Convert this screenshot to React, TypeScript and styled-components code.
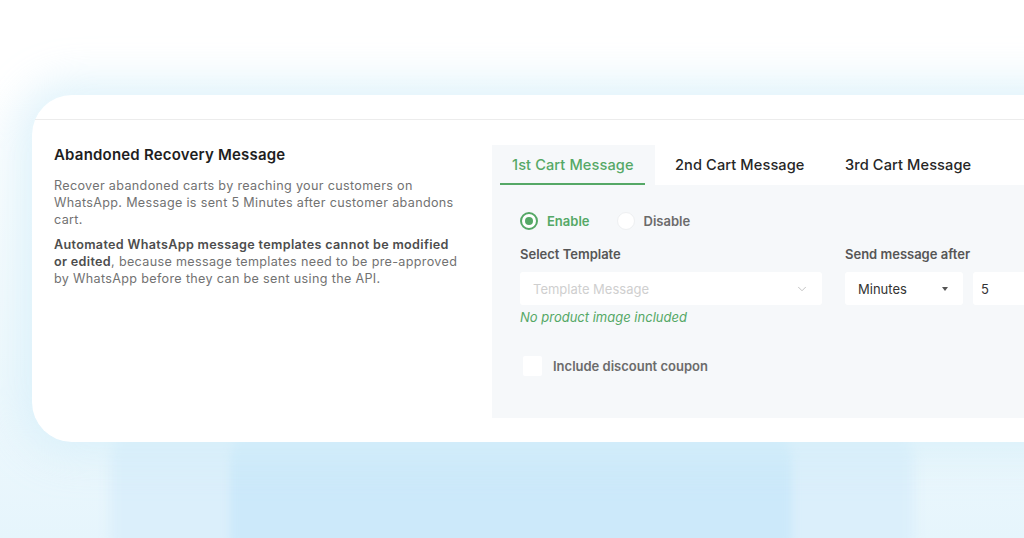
import React from 'react';
import styled, { createGlobalStyle } from 'styled-components';
import { ChevronDown } from 'lucide-react';

const GlobalStyle = createGlobalStyle`
  html, body {
    margin: 0;
    padding: 0;
    height: 100%;
  }
  body {
    font-family: Inter, "Noto Sans", sans-serif;
    -webkit-font-smoothing: antialiased;
  }
`;

const green = '#55a866';

const Page = styled.div`
  position: relative;
  width: 1024px;
  height: 538px;
  overflow: hidden;
  background: linear-gradient(to bottom, #ffffff 0%, #ffffff 14%, #f3fafd 55%, #e6f5fc 100%);
`;

// decorative stacked sheets peeking out below the card
const Sheet = styled.div<{ $left: number; $right: number; $top: number; $color: string; $blur: number }>`
  position: absolute;
  left: ${(p) => p.$left}px;
  right: ${(p) => p.$right}px;
  top: ${(p) => p.$top}px;
  bottom: -40px;
  border-radius: 40px;
  background: ${(p) => p.$color};
  filter: blur(${(p) => p.$blur}px);
`;

const Stage = styled.div`
  position: relative;
  padding: 95px 0 0 32px;
`;

const Card = styled.section`
  width: 1060px;
  height: 347px;
  background: #ffffff;
  border-radius: 40px 0 0 40px;
  box-shadow: 0 0 40px 14px rgba(214, 239, 250, 0.75);
  display: flex;
  flex-direction: column;
`;

const CardHeader = styled.div`
  height: 24px;
  margin-left: 3px;
  border-bottom: 1px solid #ececec;
`;

const CardBody = styled.div`
  flex: 1;
  display: flex;
  padding: 25px 0 24px 22px;
`;

const Intro = styled.div`
  flex: 0 0 410px;
  margin-right: 28px;
  padding-top: 1px;
`;

const Title = styled.h2`
  margin: 0 0 13px;
  font-size: 15px;
  font-weight: 600;
  color: #1e1e1e;
  letter-spacing: 0.2px;
  line-height: 18px;
`;

const Para = styled.p`
  margin: 0 0 8px;
  font-size: 12.6px;
  line-height: 17px;
  color: #727272;
  letter-spacing: 0.33px;

  strong {
    font-weight: 600;
    color: #4d4d4d;
  }
`;

const Settings = styled.div`
  flex: 1;
  min-width: 0;
  display: flex;
  flex-direction: column;
`;

const Tabs = styled.div`
  display: flex;
  height: 40px;
`;

const Tab = styled.div<{ $active?: boolean; $width: number }>`
  position: relative;
  width: ${(p) => p.$width}px;
  padding-left: 20px;
  box-sizing: border-box;
  display: flex;
  align-items: center;
  font-size: 14.6px;
  font-weight: 500;
  letter-spacing: 0.1px;
  color: ${(p) => (p.$active ? green : '#262626')};
  background: ${(p) => (p.$active ? '#f6f8fa' : 'transparent')};

  &::after {
    content: '';
    display: ${(p) => (p.$active ? 'block' : 'none')};
    position: absolute;
    left: 8px;
    right: 10px;
    bottom: 0;
    height: 2px;
    background: ${green};
  }
`;

const Panel = styled.div`
  flex: 1;
  background: #f6f8fa;
  padding: 27px 0 0 28px;
`;

const RadioRow = styled.div`
  display: flex;
  align-items: center;
  gap: 27px;
  height: 18px;
`;

const RadioOption = styled.label<{ $checked?: boolean }>`
  display: flex;
  align-items: center;
  gap: 9px;
  font-size: 13px;
  font-weight: 600;
  color: ${(p) => (p.$checked ? green : '#6b6b6b')};
`;

const RadioDot = styled.span<{ $checked?: boolean }>`
  width: 18px;
  height: 18px;
  box-sizing: border-box;
  border-radius: 50%;
  background: #ffffff;
  border: ${(p) => (p.$checked ? `2px solid ${green}` : '1px solid #eef0f2')};
  display: flex;
  align-items: center;
  justify-content: center;

  &::before {
    content: '';
    display: ${(p) => (p.$checked ? 'block' : 'none')};
    width: 8px;
    height: 8px;
    border-radius: 50%;
    background: ${green};
  }
`;

const FieldGrid = styled.div`
  display: grid;
  grid-template-columns: 302px 118px 133px;
  column-gap: 23px;
  margin-top: 16px;
`;

const Label = styled.div<{ $span?: number }>`
  grid-column: span ${(p) => p.$span ?? 1};
  font-size: 13px;
  font-weight: 600;
  color: #565656;
  height: 17px;
  line-height: 17px;
  margin-bottom: 9px;
`;

const Select = styled.div<{ $muted?: boolean }>`
  height: 33px;
  background: #ffffff;
  border-radius: 3px;
  display: flex;
  align-items: center;
  justify-content: space-between;
  padding: 0 13px;
  box-sizing: border-box;
  font-size: 13px;
  color: ${(p) => (p.$muted ? '#cfcfcf' : '#333333')};
`;

const NumberField = styled(Select)`
  margin-left: -13px;
  padding: 0 8px;
`;

const Caret = styled.span`
  width: 0;
  height: 0;
  margin-right: 2px;
  border-left: 3.5px solid transparent;
  border-right: 3.5px solid transparent;
  border-top: 4px solid #555;
`;

const Hint = styled.div`
  grid-column: 1 / -1;
  margin-top: 5px;
  font-size: 13px;
  font-style: italic;
  color: ${green};
  line-height: 15px;
`;

const CheckRow = styled.label`
  display: flex;
  align-items: center;
  gap: 11px;
  margin: 31px 0 0 3px;
  font-size: 13px;
  font-weight: 600;
  color: #6b6b6b;
`;

const CheckBox = styled.span`
  width: 19px;
  height: 20px;
  border-radius: 2px;
  background: #ffffff;
`;

export default function App() {
  return (
    <Page>
      <GlobalStyle />
      <Sheet $left={110} $right={110} $top={420} $color="#dbeffb" $blur={6} />
      <Sheet $left={230} $right={232} $top={420} $color="#cce9fa" $blur={4} />
      <Stage>
        <Card>
          <CardHeader />
          <CardBody>
            <Intro>
              <Title>Abandoned Recovery Message</Title>
              <Para>
                Recover abandoned carts by reaching your customers on WhatsApp. Message is sent 5
                Minutes after customer abandons cart.
              </Para>
              <Para>
                <strong>Automated WhatsApp message templates cannot be modified or edited</strong>,
                because message templates need to be pre-approved by WhatsApp before they can be
                sent using the API.
              </Para>
            </Intro>
            <Settings>
              <Tabs>
                <Tab $active $width={163}>1st Cart Message</Tab>
                <Tab $width={170}>2nd Cart Message</Tab>
                <Tab $width={170}>3rd Cart Message</Tab>
              </Tabs>
              <Panel>
                <RadioRow>
                  <RadioOption $checked>
                    <RadioDot $checked />
                    Enable
                  </RadioOption>
                  <RadioOption>
                    <RadioDot />
                    Disable
                  </RadioOption>
                </RadioRow>
                <FieldGrid>
                  <Label>Select Template</Label>
                  <Label $span={2}>Send message after</Label>
                  <Select $muted>
                    Template Message
                    <ChevronDown size={14} strokeWidth={1.4} color="#b5b5b5" />
                  </Select>
                  <Select>
                    Minutes
                    <Caret />
                  </Select>
                  <NumberField>5</NumberField>
                  <Hint>No product image included</Hint>
                </FieldGrid>
                <CheckRow>
                  <CheckBox />
                  Include discount coupon
                </CheckRow>
              </Panel>
            </Settings>
          </CardBody>
        </Card>
      </Stage>
    </Page>
  );
}
